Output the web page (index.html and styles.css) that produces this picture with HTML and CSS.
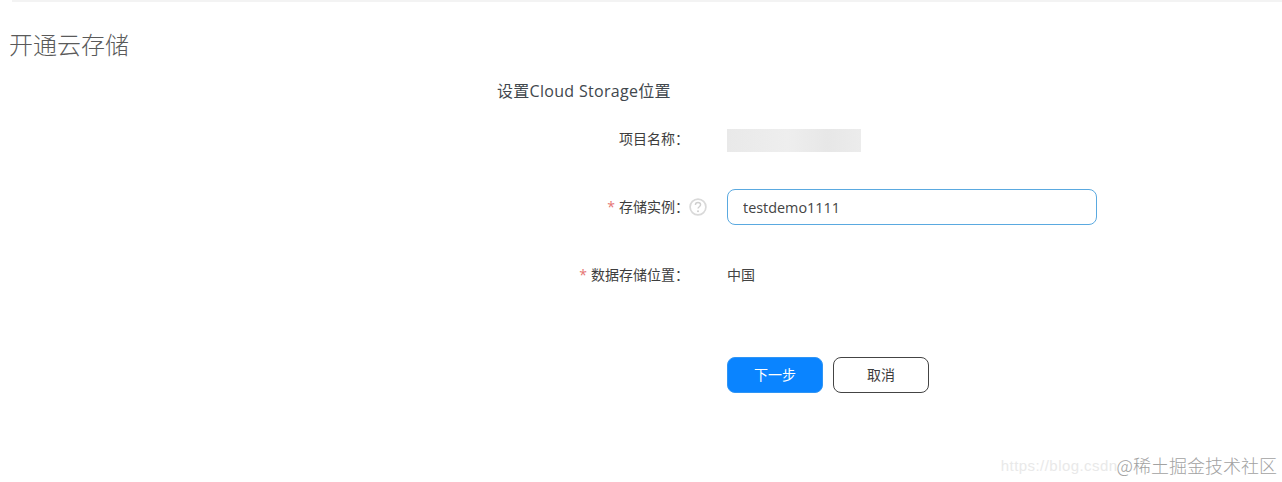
FILE: index.html
```html
<!DOCTYPE html>
<html lang="zh-CN">
<head>
  <meta charset="UTF-8" />
  <title>开通云存储</title>
  <link rel="stylesheet" href="styles.css">
</head>
<body>
  <div class="topbar"></div>
  <h1 class="page-title">开通云存储</h1>

  <div class="container">
    <h2 class="form-title">设置Cloud Storage位置</h2>

    <div class="form-group">
      <label class="form-label">项目名称：</label>
      <div class="form-value"><div class="blurred"></div></div>
    </div>

    <div class="form-group">
      <label class="form-label"><span class="req">*</span>存储实例：<svg class="help" viewBox="0 0 18 18" width="18" height="18"><circle cx="9" cy="9" r="7.9" fill="none" stroke="#d9d9d9" stroke-width="1.7"/><path d="M6.4 7.1c0-1.6 1.2-2.6 2.6-2.6s2.6.9 2.6 2.3c0 1.8-2.6 2-2.6 3.8" fill="none" stroke="#cfcfcf" stroke-width="1.4"/><circle cx="9" cy="13.2" r="1" fill="#cfcfcf"/></svg></label>
      <div class="form-value"><input class="text-input" type="text" value="testdemo1111" /></div>
    </div>

    <div class="form-group">
      <label class="form-label"><span class="req">*</span>数据存储位置：</label>
      <div class="form-value form-text">中国</div>
    </div>

    <div class="actions">
      <button class="btn btn-primary">下一步</button>
      <button class="btn btn-cancel">取消</button>
    </div>
  </div>

  <div class="watermark"><span class="wm-url">https://blog.csdn</span><span class="wm-name">@稀土掘金技术社区</span></div>
</body>
</html>
```

FILE: styles.css
```css
* {
  box-sizing: border-box;
}

html, body {
  height: 100%;
}

body {
  margin: 0;
  height: 482px;
  overflow: hidden;
  position: relative;
  background: #fff;
  color: #3d3d3d;
  font-family: "Open Sans", "Noto Sans CJK SC", sans-serif;
  font-size: 14px;
}

.topbar {
  height: 2px;
  margin-left: 12px;
  background: #f3f3f3;
}

.page-title {
  margin: 26px 0 0 9px;
  font-size: 24px;
  line-height: 34px;
  font-weight: 300;
  color: #5a5a5a;
}

.container {
  margin-left: 497px;
  width: 600px;
}

.form-title {
  margin: 17px 0 0;
  font-size: 16px;
  line-height: 24px;
  font-weight: 400;
  letter-spacing: 0.3px;
  color: #41474d;
}

.form-group {
  display: flex;
  align-items: center;
  height: 36px;
  margin-top: 32px;
}

.form-group:nth-of-type(1) {
  margin-top: 19px;
}

.form-group:nth-of-type(1) .form-label {
  padding-bottom: 4px;
}

.form-group:nth-of-type(2) {
  margin-top: 31px;
}

.form-label {
  width: 230px;
  padding-right: 38px;
  padding-bottom: 2px;
  display: flex;
  justify-content: flex-end;
  align-items: center;
  position: relative;
  white-space: nowrap;
}

.req {
  color: #e57373;
  margin-right: 4px;
}

.help {
  position: absolute;
  left: 192px;
  top: 50%;
  margin-top: -9px;
}

.form-value {
  flex: 1;
  color: #444;
}

.form-text {
  padding-bottom: 3px;
}

.blurred {
  width: 134px;
  height: 23px;
  background: linear-gradient(90deg, #e9e9e9, #eeeeee 45%, #e7e7e7 75%, #ececec);
  filter: blur(0.6px);
}

.text-input {
  display: block;
  width: 370px;
  height: 36px;
  padding: 0 15px;
  border: 1px solid #5aa9e0;
  border-radius: 8px;
  outline: none;
  color: #444;
  font-family: inherit;
  font-size: 14.4px;
}

.actions {
  display: flex;
  gap: 10px;
  margin: 64px 0 0 230px;
}

.btn {
  width: 96px;
  height: 36px;
  padding: 0 0 2px;
  border-radius: 8px;
  font-family: inherit;
  font-size: 14px;
  cursor: pointer;
}

.btn-primary {
  background: #0a84ff;
  border: 1px solid #2f95f5;
  color: #fff;
}

.btn-cancel {
  background: #fff;
  border: 1px solid #444;
  color: #3d3d3d;
}

.watermark {
  position: absolute;
  right: 5px;
  bottom: 4px;
  display: flex;
  align-items: center;
  white-space: nowrap;
}

.wm-url {
  color: #e9e9e9;
  font-size: 15px;
  font-family: "Liberation Sans", sans-serif;
  letter-spacing: 0.45px;
  margin-right: -1px;
}

.wm-name {
  color: #a2a2a2;
  font-size: 18px;
  font-family: "Noto Sans CJK SC", sans-serif;
  font-weight: 300;
}
```
